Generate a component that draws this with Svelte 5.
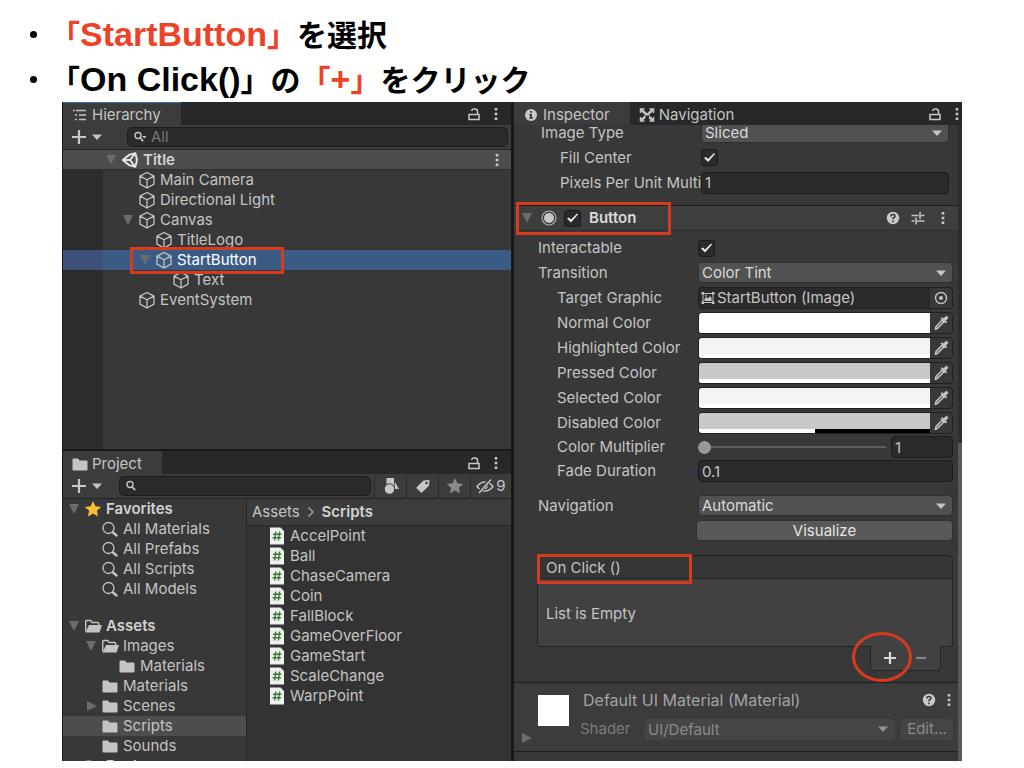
<script>
  // Scene hierarchy
  const nodes = [
    { name: 'Main Camera', depth: 1 },
    { name: 'Directional Light', depth: 1 },
    { name: 'Canvas', depth: 1, open: true },
    { name: 'TitleLogo', depth: 2 },
    { name: 'StartButton', depth: 2, open: true, selected: true },
    { name: 'Text', depth: 3 },
    { name: 'EventSystem', depth: 1 }
  ];

  // Project folders
  const favorites = [
    { name: 'Favorites', depth: 0, icon: 'star', open: true, bold: true },
    { name: 'All Materials', depth: 1, icon: 'find' },
    { name: 'All Prefabs', depth: 1, icon: 'find' },
    { name: 'All Scripts', depth: 1, icon: 'find' },
    { name: 'All Models', depth: 1, icon: 'find' }
  ];
  const folders = [
    { name: 'Assets', depth: 0, icon: 'folderOpen', open: true, bold: true },
    { name: 'Images', depth: 1, icon: 'folderOpen', open: true },
    { name: 'Materials', depth: 2, icon: 'folder' },
    { name: 'Materials', depth: 1, icon: 'folder' },
    { name: 'Scenes', depth: 1, icon: 'folder', open: false },
    { name: 'Scripts', depth: 1, icon: 'folder', selected: true },
    { name: 'Sounds', depth: 1, icon: 'folder' },
    { name: 'Packages', depth: 0, icon: 'folder', open: false, bold: true }
  ];

  const scripts = [
    'AccelPoint', 'Ball', 'ChaseCamera', 'Coin', 'FallBlock',
    'GameOverFloor', 'GameStart', 'ScaleChange', 'WarpPoint'
  ];

  const colors = [
    { label: 'Normal Color', value: '#ffffff', alpha: 100 },
    { label: 'Highlighted Color', value: '#f4f4f4', alpha: 100 },
    { label: 'Pressed Color', value: '#c8c8c8', alpha: 100 },
    { label: 'Selected Color', value: '#f4f4f4', alpha: 100 },
    { label: 'Disabled Color', value: '#c8c8c8', alpha: 50 }
  ];

  let fillCenter = $state(true);
  let enabled = $state(true);
  let interactable = $state(true);
  let multiplier = $state(1);
</script>

{#snippet icon(name)}
  <svg class="icon" width="18" height="18" viewBox="0 0 18 18" aria-hidden="true">
    {#if name === 'cube'}
      <path d="M9 1.5l7 3.6v8L9 17l-7-3.9v-8zM2 5.1l7 3.7 7-3.7M9 8.8V17" fill="none" stroke="#c4c4c4" stroke-width="1.3" stroke-linejoin="round" />
    {:else if name === 'unity'}
      <path d="M14.3 2.2L8.2 3.9 1.8 9l6.4 5.1 6.1 1.7 1.4-5V7.200zM1.800 9H9M9 9l5.300-6.800M9 9l5.300 6.800" fill="none" stroke="#e4e4e4" stroke-width="2" stroke-linejoin="round" />
    {:else if name === 'list'}
      <path d="M2 4.500h2M5 4.500h10M4 9h2M8 9h7M4 13.500h2M8 13.500h7" stroke="#c4c4c4" stroke-width="1.600" />
    {:else if name === 'folder'}
      <path d="M1.500 4.500q0-1 1-1h4.500l1.500 2h7q1 0 1 1v8q0 1-1 1h-13q-1 0-1-1z" fill="#c4c4c4" />
    {:else if name === 'folderOpen'}
      <path d="M1.700 14.500v-10q0-1 1-1h4l1.500 2h5.500q1 0 1 1V8" fill="none" stroke="#c4c4c4" stroke-width="1.400" />
      <path d="M5 8h13l-2.500 7.500H1.500z" fill="#c4c4c4" />
    {:else if name === 'star' || name === 'starGray'}
      <path d="M9 1l2.400 5.300 5.800.6-4.300 3.900 1.200 5.700L9 13.600l-5.100 2.900 1.200-5.700L.8 6.900l5.800-.6z" fill={name === 'star' ? '#f6bf36' : '#8a8a8a'} />
    {:else if name === 'find'}
      <circle cx="7.500" cy="8" r="5.500" fill="none" stroke="#c4c4c4" stroke-width="1.300" />
      <path d="M12 12.500l3.500 3" stroke="#c4c4c4" stroke-width="2.400" stroke-linecap="round" />
    {:else if name === 'search' || name === 'searchMenu'}
      <circle cx="7" cy="7.500" r="3" fill="none" stroke="#c4c4c4" stroke-width="1.400" />
      <path d="M9.200 10l3 3.200" stroke="#c4c4c4" stroke-width="1.800" />
      {#if name === 'searchMenu'}<path d="M11 8h4.500l-2.200 2.500z" fill="#c4c4c4" />{/if}
    {:else if name === 'lock'}
      <path d="M4 9.500h10v5H4zM12.500 9.500V6.500q0-2.500-2.500-2.500h-1Q7 4 6.700 6" fill="none" stroke="#c8c8c8" stroke-width="1.500" />
    {:else if name === 'dots'}
      <path d="M7.700 3h2.600v2.600H7.700zM7.700 7.700h2.600v2.600H7.700zM7.700 12.400h2.600V15H7.700z" fill="#c8c8c8" />
    {:else if name === 'plus'}
      <path d="M9 2v14M2 9h14" stroke="#c8c8c8" stroke-width="2.200" />
    {:else if name === 'add'}
      <path d="M9 3v12M3 9h12" stroke="#dadada" stroke-width="2.200" />
    {:else if name === 'remove'}
      <path d="M4 9h10" stroke="#848484" stroke-width="2.200" />
    {:else if name === 'down'}
      <path d="M4 6.500h10l-5 5.500z" fill="#c4c4c4" />
    {:else if name === 'info'}
      <circle cx="9" cy="9" r="6" fill="#c8c8c8" />
      <path d="M8 5h2v1.800H8zM7.300 8H10v3.500h1v1.300H7.300v-1.300H8V9.200h-.7z" fill="#383838" />
    {:else if name === 'help'}
      <circle cx="9" cy="9" r="6.200" fill="#c8c8c8" />
      <path d="M7 7.400Q7 5.500 9 5.500t2 1.700Q11 8.300 9 9.300v.9M9 11.500v1.700" fill="none" stroke="#383838" stroke-width="1.600" />
    {:else if name === 'nav'}
      <path d="M2.500 7V3h4M11.500 3h4v4M15.500 11v4h-4M6.500 15h-4v-4" fill="none" stroke="#c4c4c4" stroke-width="1.500" />
      <path d="M3 3.500L15 14.500M15 3.500L3 14.500" stroke="#c4c4c4" stroke-width="2.400" />
      <path d="M7.500 9.500h3.500v3H7.500z" fill="#282828" />
    {:else if name === 'preset'}
      <path d="M2.500 6.500h7M12 6.500h3.500M11 3v7M2.500 12h3M8 12h7.500M7 8.500v7" stroke="#c4c4c4" stroke-width="1.600" />
    {:else if name === 'radio'}
      <circle cx="9" cy="9" r="7" fill="none" stroke="#b0b0b0" stroke-width="1.200" />
      <circle cx="9" cy="9" r="5" fill="#c8c8c8" />
    {:else if name === 'target'}
      <circle cx="9" cy="9" r="5.500" fill="none" stroke="#c4c4c4" stroke-width="1.400" />
      <circle cx="9" cy="9" r="2" fill="#c4c4c4" />
    {:else if name === 'picker'}
      <path d="M10 6.300l1.800 1.800-6.300 6.300-2 .6.500-2.300z" fill="none" stroke="#c4c4c4" stroke-width="1.600" />
      <path d="M9 4.500l1.300-.8 1.300 1.300 2-2.300q1-.7 1.800.1t.1 1.800l-2.200 2 1.300 1.300-1 1.200z" fill="#c4c4c4" stroke="#c4c4c4" />
      <path d="M3 15.800l2-.3-1.700-1.600z" fill="#c4c4c4" />
    {:else if name === 'image'}
      <path d="M4 4.500h10v9H4z" fill="none" stroke="#c4c4c4" />
      <path d="M2.500 3h2.500v2.500H2.500zM13 3h2.500v2.500H13zM2.500 12.500H5V15H2.500zM13 12.500h2.500V15H13zM5.500 12V9.500L7.500 8 9 9.500 11 7l1.500 2v3z" fill="#c4c4c4" />
      <path d="M6 6h1.500v1.500H6z" fill="#c4c4c4" />
    {:else if name === 'script'}
      <path d="M2 .5h10.500l3.500 3.500v13.500H2z" fill="#f0f0f0" />
      <path d="M7.800 4.500l-1.200 9M11.600 4.500l-1.200 9M5 7.200h8.500M4.500 10.800H13" stroke="#3c7a35" stroke-width="1.400" />
    {:else if name === 'shapes'}
      <path d="M4.500 1H12v7H4.500zM13 5l4 7h-5z" fill="#c8c8c8" />
      <circle cx="7.500" cy="12" r="5.200" fill="#c8c8c8" stroke="#3c3c3c" />
    {:else if name === 'tag'}
      <path d="M9.500 3.500l5-.5q1 0 1 1l-.5 4.800-6.800 6.500q-.8.700-1.500 0L2.800 11.500q-.6-.8 0-1.500z" fill="#c8c8c8" />
      <circle cx="12.500" cy="6" r="1.300" fill="#3c3c3c" />
    {:else if name === 'hidden'}
      <path d="M1 9.500Q4.500 5 9 5t8 4.500Q13.500 14 9 14T1 9.500z" fill="none" stroke="#c4c4c4" stroke-width="1.400" />
      <circle cx="9" cy="9.500" r="2.600" fill="#c4c4c4" />
      <path d="M14.500 2l-12 14" stroke="#3c3c3c" stroke-width="3.500" />
      <path d="M15 2.500l-12 13.500" stroke="#c4c4c4" stroke-width="1.500" />
    {:else if name === 'chevron'}
      <path d="M6.500 4.500L11 9l-4.500 4.500" fill="none" stroke="#9a9a9a" stroke-width="1.600" />
    {/if}
  </svg>
{/snippet}

{#snippet row(node, iconName)}
  <li class="row" class:selected={node.selected} class:bold={node.bold} style:--depth={node.depth}>
    <span class="fold" class:open={node.open === true} class:closed={node.open === false}></span>
    {@render icon(iconName)}
    <span>{node.name}</span>
    {#if node.name === 'StartButton'}<span class="mark mark-row"></span>{/if}
  </li>
{/snippet}

{#snippet dropdown(id, value, disabled = false)}
  <div class="dropdown" class:disabled>
    <select {id} {disabled}><option>{value}</option></select>
    {@render icon('down')}
  </div>
{/snippet}

{#snippet tools()}
  <span class="tools">
    <button class="flat" aria-label="Lock">{@render icon('lock')}</button>
    <button class="flat" aria-label="Menu">{@render icon('dots')}</button>
  </span>
{/snippet}

<main class="slide">
  <ul class="steps">
    <li><span class="red">「<b>StartButton</b>」</span>を選択</li>
    <li>「<b>On Click()</b>」の<span class="red">「<b>+</b>」</span>をクリック</li>
  </ul>

  <div class="editor">
    <div class="left">
      <section class="panel hierarchy">
        <header class="tabs">
          <button class="tab active focused">{@render icon('list')}Hierarchy</button>
          {@render tools()}
        </header>
        <div class="toolbar">
          <button class="flat create" aria-label="Create">{@render icon('plus')}{@render icon('down')}</button>
          <label class="search">{@render icon('searchMenu')}<input type="text" placeholder="All" aria-label="Search hierarchy" /></label>
        </div>
        <div class="scene">
          <span class="fold open"></span>
          {@render icon('unity')}
          <b>Title</b>
          <button class="flat" aria-label="Scene menu">{@render icon('dots')}</button>
        </div>
        <ul class="tree nodes">
          {#each nodes as node}{@render row(node, 'cube')}{/each}
        </ul>
      </section>

      <section class="panel project">
        <header class="tabs">
          <button class="tab active">{@render icon('folder')}Project</button>
          {@render tools()}
        </header>
        <div class="toolbar">
          <button class="flat create" aria-label="Create">{@render icon('plus')}{@render icon('down')}</button>
          <label class="search">{@render icon('search')}<input type="text" aria-label="Search project" /></label>
          <button class="filter" aria-label="Search by type">{@render icon('shapes')}</button>
          <button class="filter" aria-label="Search by label">{@render icon('tag')}</button>
          <button class="filter" aria-label="Save search">{@render icon('starGray')}</button>
          <button class="filter count" aria-label="Hidden packages">{@render icon('hidden')}9</button>
        </div>
        <div class="browser">
          <div class="folders">
            <ul class="tree">
              {#each favorites as item}{@render row(item, item.icon)}{/each}
            </ul>
            <ul class="tree">
              {#each folders as item}{@render row(item, item.icon)}{/each}
            </ul>
          </div>
          <div class="files">
            <nav class="crumbs"><a href="#assets">Assets</a>{@render icon('chevron')}<b>Scripts</b></nav>
            <ul class="tree">
              {#each scripts as name}
                <li class="file">{@render icon('script')}<span>{name}</span></li>
              {/each}
            </ul>
          </div>
        </div>
      </section>
    </div>

    <section class="panel inspector">
      <header class="tabs">
        <button class="tab active">{@render icon('info')}Inspector</button>
        <button class="tab">{@render icon('nav')}Navigation</button>
        {@render tools()}
      </header>
      <div class="scroll">
        <div class="components">
          <div class="fields image">
            <div class="field cut">
              <label for="image-type">Image Type</label>
              {@render dropdown('image-type', 'Sliced')}
            </div>
            <div class="field nested">
              <label for="fill-center">Fill Center</label>
              <input id="fill-center" type="checkbox" bind:checked={fillCenter} />
            </div>
            <div class="field nested">
              <label for="ppu">Pixels Per Unit Multi</label>
              <input id="ppu" type="text" value="1" />
            </div>
          </div>

          <div class="component">
            <span class="fold open"></span>
            {@render icon('radio')}
            <input id="enabled" type="checkbox" bind:checked={enabled} />
            <label for="enabled">Button</label>
            <div class="actions">
              <button class="flat" aria-label="Help">{@render icon('help')}</button>
              <button class="flat" aria-label="Presets">{@render icon('preset')}</button>
              <button class="flat" aria-label="Component menu">{@render icon('dots')}</button>
            </div>
            <span class="mark mark-component"></span>
          </div>

          <div class="fields">
            <div class="field short">
              <label for="interactable">Interactable</label>
              <input id="interactable" type="checkbox" bind:checked={interactable} />
            </div>
            <div class="field">
              <label for="transition">Transition</label>
              {@render dropdown('transition', 'Color Tint')}
            </div>
            <div class="field nested">
              <label for="graphic">Target Graphic</label>
              <div class="object">
                {@render icon('image')}
                <input id="graphic" type="text" value="StartButton (Image)" />
                <button class="flat" aria-label="Pick object">{@render icon('target')}</button>
              </div>
            </div>
            {#each colors as color}
              <div class="field nested">
                <span>{color.label}</span>
                <div class="color">
                  <button class="swatch" aria-label={color.label} style:background={color.value}>
                    <span class="alpha"><i style:width="{color.alpha}%"></i></span>
                  </button>
                  <button class="flat" aria-label="Pick {color.label}">{@render icon('picker')}</button>
                </div>
              </div>
            {/each}
            <div class="field nested short">
              <label for="multiplier">Color Multiplier</label>
              <div class="slider">
                <input id="multiplier" type="range" min="1" max="5" bind:value={multiplier} />
                <input type="text" bind:value={multiplier} aria-label="Color Multiplier value" />
              </div>
            </div>
            <div class="field nested short">
              <label for="fade">Fade Duration</label>
              <input id="fade" type="text" value="0.1" />
            </div>
            <div class="field spaced">
              <label for="navigation">Navigation</label>
              {@render dropdown('navigation', 'Automatic')}
            </div>
            <div class="field">
              <button class="visualize">Visualize</button>
            </div>

            <div class="event">
              <div class="event-title">On Click ()<span class="mark mark-event"></span></div>
              <div class="event-body">List is Empty</div>
              <div class="event-buttons">
                <button class="flat" aria-label="Add">{@render icon('add')}</button>
                <button class="flat" aria-label="Remove">{@render icon('remove')}</button>
                <span class="mark mark-add"></span>
              </div>
            </div>
          </div>

          <div class="material">
            <span class="fold closed"></span>
            <span class="preview"></span>
            <div class="material-info">
              <div class="material-title">
                <span>Default UI Material (Material)</span>
                <button class="flat" aria-label="Material help">{@render icon('help')}</button>
                <button class="flat" aria-label="Material menu">{@render icon('dots')}</button>
              </div>
              <div class="shader">
                <label for="shader">Shader</label>
                {@render dropdown('shader', 'UI/Default', true)}
                <button class="edit" disabled>Edit...</button>
              </div>
            </div>
          </div>
        </div>
        <div class="scrollbar"><span></span></div>
      </div>
    </section>
  </div>
</main>

<style>
  :global(body) {
    background: #fff;
  }

  .slide {
    box-sizing: border-box;
    height: 100vh;
    padding: 11px 62px 7px;
    display: flex;
    flex-direction: column;
    font-family: Inter, 'Noto Sans CJK JP', sans-serif;
  }

  .slide * {
    box-sizing: border-box;
  }

  ul {
    list-style: none;
    margin: 0;
    padding: 0;
  }

  .steps {
    height: 91px;
    margin: 0 -12px;
    font: 700 30px/45px 'Noto Sans CJK JP', sans-serif;
    color: #000;
    white-space: nowrap;
  }

  .steps li {
    position: relative;
    height: 45px;
  }

  .steps li::before {
    content: '';
    position: absolute;
    left: -20px;
    top: 20px;
    width: 7px;
    height: 7px;
    border-radius: 50%;
    background: #000;
  }

  .steps b {
    font: 700 34px/45px 'Liberation Sans', sans-serif;
  }

  .red {
    color: #ee4226;
  }

  /* Editor window */
  .editor {
    flex: 1;
    min-height: 0;
    display: grid;
    grid-template-columns: minmax(0, 1fr) minmax(0, 1fr);
    grid-template-rows: minmax(0, 1fr);
    gap: 3px;
    padding-left: 1px;
    background: #191919;
    color: #c4c4c4;
    font-size: 15px;
    line-height: 20px;
    overflow: hidden;
  }

  .left {
    display: grid;
    grid-template-rows: minmax(0, 347fr) minmax(0, 310fr);
    gap: 2px;
  }

  .panel {
    display: flex;
    flex-direction: column;
    min-height: 0;
    background: #383838;
    overflow: hidden;
  }

  button,
  input,
  select {
    font: inherit;
    color: inherit;
    margin: 0;
  }

  .icon {
    display: block;
    flex: none;
  }

  .flat {
    flex: none;
    display: flex;
    align-items: center;
    padding: 0;
    border: 0;
    background: none;
  }

  .tabs {
    flex: none;
    display: flex;
    height: 23px;
    background: #282828;
  }

  .tab {
    display: flex;
    align-items: center;
    gap: 3px;
    padding: 1px 20px 0 8px;
    border: 0;
    border-top: 1px solid transparent;
    background: none;
  }

  .tab.active {
    background: #3c3c3c;
  }

  .tab.focused {
    border-top-color: #3a72b0;
  }

  .tools {
    display: flex;
    gap: 4px;
    margin-left: auto;
    padding-right: 6px;
  }

  .inspector .tools {
    padding-right: 0;
    margin-right: -4px;
  }

  .toolbar {
    flex: none;
    display: flex;
    align-items: center;
    height: 25px;
    background: #3c3c3c;
    border-bottom: 1px solid #242424;
  }

  .create {
    width: 56px;
    padding-left: 7px;
  }

  .search {
    flex: 1;
    min-width: 0;
    display: flex;
    align-items: center;
    height: 20px;
    margin-right: 3px;
    padding-left: 3px;
    border: 1px solid #1c1c1c;
    border-radius: 5px;
    background: #2a2a2a;
  }

  .hierarchy .search {
    margin-left: 8px;
  }

  .search input {
    flex: 1;
    min-width: 0;
    padding: 0 2px;
    border: 0;
    background: none;
  }

  .search input::placeholder {
    color: #777;
  }

  .filter {
    flex: none;
    display: flex;
    align-items: center;
    justify-content: center;
    width: 32px;
    height: 24px;
    padding: 0;
    border: 0;
    border-left: 1px solid #2a2a2a;
    background: none;
  }

  .filter.count {
    width: 41px;
    gap: 2px;
  }

  /* Trees */
  .fold {
    flex: none;
    width: 16px;
    height: 10px;
  }

  .fold.open {
    background: #6c6c6c;
    clip-path: polygon(3px 0, 13px 0, 8px 10px);
  }

  .fold.closed {
    background: #6c6c6c;
    clip-path: polygon(4px 0, 14px 5px, 4px 10px);
  }

  .scene {
    flex: none;
    display: flex;
    align-items: center;
    gap: 2px;
    height: 20px;
    padding: 0 5px 0 40px;
    background: #4d4d4d;
    border-bottom: 1px solid #2e2e2e;
  }

  .scene b {
    flex: 1;
    padding-left: 2px;
  }

  b,
  .bold {
    font-weight: 600;
    color: #d2d2d2;
  }

  .steps b {
    color: inherit;
  }

  .nodes {
    flex: 1;
    background: linear-gradient(to right, #2d2d2d 40px, transparent 40px);
  }

  .row {
    position: relative;
    display: flex;
    align-items: center;
    gap: 2px;
    height: 20px;
    padding-left: calc(var(--depth) * 17px + 3px);
    white-space: nowrap;
  }

  .nodes .row {
    padding-left: calc(var(--depth) * 17px + 40px);
  }

  .row > span:nth-of-type(2) {
    padding-left: 2px;
  }

  .folders .selected {
    background: #4d4d4d;
  }

  .nodes .selected {
    background: linear-gradient(to right, #3c5078 40px, #3a5c84 40px);
    color: #fff;
  }

  .browser {
    flex: 1;
    min-height: 0;
    display: grid;
    grid-template-columns: minmax(0, 183fr) minmax(0, 264fr);
    gap: 1px;
    background: #242424;
  }

  .folders {
    display: flex;
    flex-direction: column;
    gap: 17px;
    min-height: 0;
    background: #383838;
    overflow: hidden;
  }

  .files {
    background: #333;
    overflow: hidden;
  }

  .crumbs {
    display: flex;
    align-items: center;
    gap: 2px;
    height: 27px;
    padding-left: 5px;
    background: #3c3c3c;
    border-bottom: 1px solid #2a2a2a;
  }

  .crumbs a {
    color: inherit;
    text-decoration: none;
  }

  .file {
    display: flex;
    align-items: center;
    gap: 4px;
    height: 20px;
    padding-left: 21px;
  }

  /* Inspector */
  .scroll {
    flex: 1;
    min-height: 0;
    display: flex;
  }

  .components {
    flex: 1;
    min-width: 0;
    overflow: hidden;
  }

  .scrollbar {
    display: flex;
    align-items: flex-end;
    width: 4px;
    background: #2e2e2e;
  }

  .scrollbar span {
    width: 4px;
    height: 50%;
    background: #5a5a5a;
  }

  .fields {
    padding: 5px 5px 10px 24px;
  }

  .fields.image {
    padding: 0 9px 10px 27px;
  }

  .field {
    display: grid;
    grid-template-columns: 160px minmax(0, 1fr);
    align-items: center;
    height: 25px;
    white-space: nowrap;
  }

  .field.short {
    height: 24px;
  }

  /* Scrolled half out of view */
  .field.cut {
    grid-template-rows: 100%;
    height: 20px;
    align-items: end;
    overflow: hidden;
    padding-bottom: 2px;
  }

  .field.spaced {
    margin-top: 10px;
  }

  .nested > :first-child {
    padding-left: 19px;
  }

  input[type='checkbox'] {
    appearance: none;
    width: 17px;
    height: 17px;
    border: 1px solid #1c1c1c;
    border-radius: 3px;
    background: #2a2a2a;
  }

  input[type='checkbox']:checked::before {
    content: '';
    display: block;
    width: 15px;
    height: 15px;
    background: #e8e8e8;
    clip-path: polygon(2px 8px, 4px 7px, 6px 9px, 12px 3px, 13px 4px, 6px 12px);
  }

  .field input[type='text'] {
    width: 100%;
    height: 22px;
    padding: 0 3px;
    border: 1px solid #1c1c1c;
    border-radius: 4px;
    background: #2a2a2a;
  }

  .dropdown {
    display: grid;
    align-items: center;
    height: 21px;
    border: 1px solid #303030;
    border-radius: 4px;
    background: #515151;
    color: #dadada;
  }

  .dropdown select {
    grid-area: 1 / 1;
    appearance: none;
    width: 100%;
    height: 19px;
    padding: 0 3px;
    border: 0;
    background: none;
    opacity: 1;
  }

  .dropdown .icon {
    grid-area: 1 / 1;
    justify-self: end;
    margin-right: 2px;
    pointer-events: none;
  }

  .dropdown.disabled {
    flex: 1;
    background: #454545;
    border-color: #454545;
    color: #8a8a8a;
  }

  .dropdown.disabled .icon {
    opacity: 0.6;
  }

  .component {
    position: relative;
    display: flex;
    align-items: center;
    height: 26px;
    padding: 0 6px 0 5px;
    background: #3e3e3e;
    border-top: 1px solid #1e1e1e;
    border-bottom: 1px solid #303030;
  }

  .component > .icon {
    margin: 0 6px 0 5px;
  }

  .component label {
    padding-left: 8px;
    font-weight: 600;
    color: #dadada;
  }

  .actions {
    display: flex;
    gap: 7px;
    margin-left: auto;
  }

  .object,
  .color {
    display: flex;
    align-items: center;
    height: 22px;
    border: 1px solid #202020;
    border-radius: 4px;
    background: #2a2a2a;
    overflow: hidden;
  }

  .field .object input[type='text'] {
    flex: 1;
    min-width: 0;
    padding: 0;
    border: 0;
    background: none;
  }

  .object .flat,
  .color .flat {
    height: 20px;
    padding: 0 2px;
    background: #383838;
  }

  .swatch {
    flex: 1;
    display: flex;
    align-items: flex-end;
    height: 20px;
    padding: 0;
    border: 0;
  }

  .alpha {
    width: 100%;
    background: #000;
  }

  .alpha i {
    display: block;
    height: 4px;
    background: #fff;
  }

  .slider {
    display: grid;
    grid-template-columns: minmax(0, 1fr) 62px;
    align-items: center;
    gap: 5px;
  }

  .slider input[type='range'] {
    appearance: none;
    width: 100%;
    height: 13px;
    background: linear-gradient(#5e5e5e, #5e5e5e) center / 100% 2px no-repeat;
  }

  .slider input[type='range']::-webkit-slider-thumb {
    appearance: none;
    width: 13px;
    height: 13px;
    border-radius: 50%;
    background: #999;
  }

  .visualize {
    grid-column: 2;
    height: 21px;
    margin-left: -2px;
    padding: 0;
    border: 1px solid #303030;
    border-radius: 4px;
    background: #585858;
    color: #e4e4e4;
  }

  .event {
    margin: 12px 0 0 -1px;
  }

  .event-title {
    position: relative;
    height: 24px;
    padding: 2px 8px;
    border: 1px solid #242424;
    border-radius: 4px 4px 0 0;
    background: #353535;
  }

  .event-body {
    height: 68px;
    padding: 25px 8px;
    border: 1px solid #242424;
    border-top: 0;
    border-radius: 0 0 4px 4px;
    background: #414141;
  }

  .event-buttons {
    position: relative;
    display: flex;
    justify-content: space-between;
    width: 71px;
    height: 25px;
    margin: -1px 12px 0 auto;
    padding: 0 10px;
    border: 1px solid #242424;
    border-top: 0;
    border-radius: 0 0 4px 4px;
    background: #414141;
  }

  .material {
    display: flex;
    height: 70px;
    margin-top: 1px;
    padding: 0 5px 0 4px;
    background: #3c3c3c;
    border-top: 1px solid #1e1e1e;
    border-bottom: 1px solid #1e1e1e;
  }

  .material .fold {
    margin-top: 50px;
  }

  .preview {
    flex: none;
    width: 31px;
    height: 31px;
    margin: 12px 11px 0 4px;
    background: #fff;
  }

  .material-info {
    flex: 1;
    min-width: 0;
  }

  .material-title {
    display: flex;
    align-items: center;
    gap: 2px;
    height: 34px;
    margin-right: -5px;
    padding-left: 3px;
    color: #a4a4a4;
    font-size: 16px;
  }

  .material-title span {
    flex: 1;
  }

  .shader {
    display: flex;
    align-items: center;
    height: 24px;
    color: #7a7a7a;
  }

  .shader label {
    width: 64px;
  }

  .edit {
    width: 52px;
    height: 21px;
    margin-left: 6px;
    padding: 0;
    border: 0;
    border-radius: 4px;
    background: #454545;
    color: #8a8a8a;
  }

  /* Red outlines over the editor */
  .mark {
    position: absolute;
    z-index: 1;
    border: 3px solid #d63b1d;
    pointer-events: none;
  }

  .mark-row {
    left: 67px;
    top: -3px;
    width: 154px;
    height: 27px;
  }

  .mark-component {
    left: 2px;
    top: -4px;
    width: 155px;
    height: 33px;
  }

  .mark-event {
    left: -1px;
    top: -2px;
    width: 155px;
    height: 30px;
  }

  .mark-add {
    left: -19px;
    top: -14px;
    width: 60px;
    height: 50px;
    border-radius: 50%;
  }
</style>
